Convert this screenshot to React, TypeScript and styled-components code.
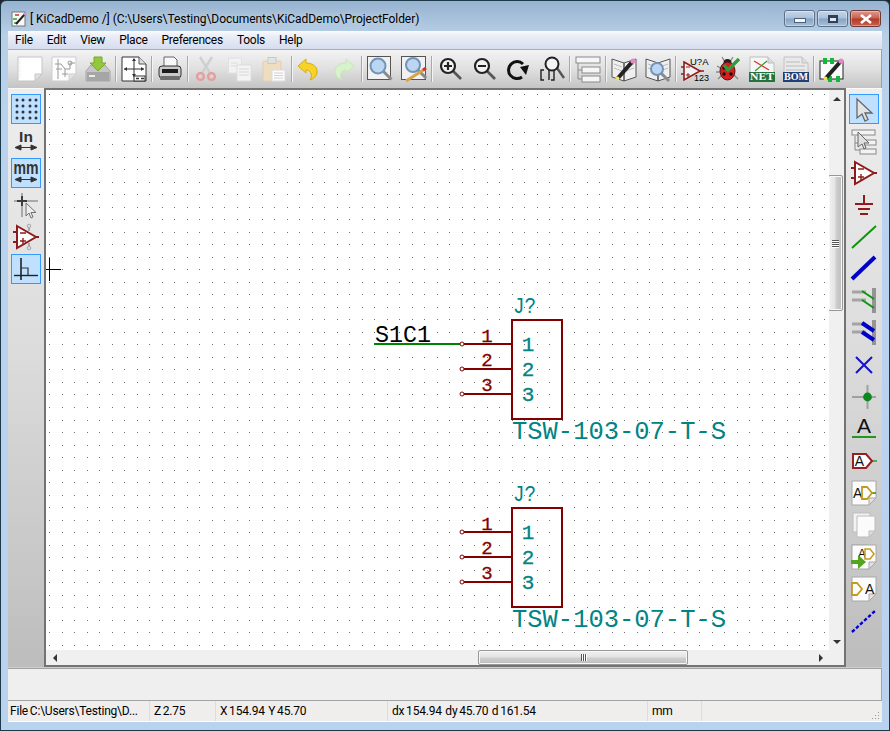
import React, { useMemo } from 'react';
import styled, { createGlobalStyle } from 'styled-components';

const GlobalStyle = createGlobalStyle`
  html, body {
    margin: 0;
    padding: 0;
    background: #20262c;
  }
  #root {
    width: 890px;
    height: 731px;
  }
`;

const Window = styled.div`
  width: 890px;
  height: 731px;
  box-sizing: border-box;
  display: flex;
  flex-direction: column;
  border: 1px solid #1d3a4a;
  border-radius: 6px 6px 0 0;
  overflow: hidden;
  padding: 0 7px 8px;
  background: linear-gradient(180deg, #97b3d0 0, #b8cfe6 34px, #b9d3ee 120px, #b9d3ee 100%);
  font-family: Roboto, sans-serif;
  color: #000;
`;

const TitleBar = styled.div`
  height: 30px;
  box-sizing: border-box;
  flex-shrink: 0;
  display: flex;
  align-items: flex-start;
  gap: 3px;
  padding: 10px 1px 0 3px;
`;

const TitleText = styled.span`
  flex: 1;
  font-size: 12px;
  line-height: 17px;
  letter-spacing: -0.05px;
  white-space: pre;
  text-shadow: 0 0 6px rgba(255, 255, 255, 0.6);
`;

const WinButtons = styled.div`
  display: flex;
  gap: 2px;
  margin-top: -1px;
`;

const WinButton = styled.div<{ $close?: boolean }>`
  width: 31px;
  height: 17px;
  box-sizing: border-box;
  display: flex;
  align-items: center;
  justify-content: center;
  border: 1px solid ${(p) => (p.$close ? '#6e3a38' : '#5c7088')};
  border-radius: 3px;
  box-shadow: inset 0 0 0 1px rgba(255, 255, 255, 0.35);
  background: ${(p) =>
    p.$close
      ? 'linear-gradient(180deg, #dc9a8e 0, #c9604e 48%, #b13a28 52%, #c8604f 100%)'
      : 'linear-gradient(180deg, #c6d6e8 0, #a9c0da 48%, #86a3c4 52%, #a6c0da 100%)'};
`;

const MinGlyph = styled.div`
  width: 10px;
  height: 3px;
  margin-top: 4px;
  background: #f4f7fb;
  border: 1px solid #4e6076;
`;

const MaxGlyph = styled.div`
  width: 10px;
  height: 8px;
  box-sizing: border-box;
  border: 2px solid #2f4156;
  border-top-width: 3px;
  background: #dfe8f2;
`;

const MenuBar = styled.div`
  height: 18px;
  flex-shrink: 0;
  display: flex;
  background: linear-gradient(180deg, #fafbfd 0, #e9edf7 30%, #d6ddee 100%);
`;

const MenuItem = styled.span`
  font-size: 12px;
  line-height: 18px;
  letter-spacing: -0.25px;
  padding: 0 7px;
`;

const TopBar = styled.div`
  height: 39px;
  box-sizing: border-box;
  flex-shrink: 0;
  display: flex;
  align-items: center;
  padding: 0 0 1px 5px;
  border-top: 1px solid #a9adb4;
  border-right: 1px solid #a0a0a0;
  background: linear-gradient(180deg, #f3f3f3 0, #e0e0e0 50%, #c4c4c4 100%);
`;

const TopButton = styled.div`
  width: 34px;
  height: 30px;
  flex-shrink: 0;
  display: flex;
  align-items: center;
  justify-content: center;
`;

const TopSep = styled.div`
  width: 2px;
  height: 26px;
  flex-shrink: 0;
  background: linear-gradient(90deg, #a8a8a8 50%, #f4f4f4 50%);
`;

const Main = styled.div`
  flex: 1;
  min-height: 0;
  display: flex;
`;

const SideBar = styled.div`
  width: 36px;
  flex-shrink: 0;
  box-sizing: border-box;
  display: flex;
  flex-direction: column;
  align-items: center;
  gap: 2px;
  padding-top: 5px;
  border-top: 1px solid #fafafa;
  background: linear-gradient(180deg, #eeeeee 0, #dcdcdc 45%, #bdbdbd 100%);
`;

const SideButton = styled.div<{ $active?: boolean }>`
  width: 30px;
  height: 30px;
  flex-shrink: 0;
  box-sizing: border-box;
  display: flex;
  align-items: center;
  justify-content: center;
  border: 1px solid ${(p) => (p.$active ? '#3399ff' : 'transparent')};
  background: ${(p) => (p.$active ? '#bfe0ff' : 'transparent')};
`;

const CanvasFrame = styled.div`
  flex: 1;
  min-width: 0;
  box-sizing: border-box;
  display: grid;
  grid-template-columns: 1fr 15px;
  grid-template-rows: 1fr 15px;
  border: 2px solid #737373;
  background: #f0f0f0;
`;

const Canvas = styled.div`
  position: relative;
  background: #fff;
  overflow: hidden;
`;

const Sheet = styled.svg`
  display: block;
  width: 100%;
  height: 100%;
  shape-rendering: crispEdges;
`;

const SchText = styled.text`
  font-family: 'Liberation Mono', monospace;
  shape-rendering: auto;
`;

const VScroll = styled.div`
  display: flex;
  flex-direction: column;
  background: #f0f0f0;
`;

const HScroll = styled.div`
  display: flex;
  background: #f0f0f0;
`;

const Corner = styled.div`
  background: #f0f0f0;
`;

const ArrowCell = styled.div<{ $along: 'v' | 'h' }>`
  ${(p) => (p.$along === 'v' ? 'height: 17px;' : 'width: 17px;')}
  flex-shrink: 0;
  display: flex;
  align-items: center;
  justify-content: center;
`;

const Arrow = styled.div<{ $dir: 'up' | 'down' | 'left' | 'right' }>`
  width: 0;
  height: 0;
  border-style: solid;
  border-color: transparent;
  ${(p) => (p.$dir === 'up' ? 'border-width: 0 4px 4px; border-bottom-color: #333;' : '')}
  ${(p) => (p.$dir === 'down' ? 'border-width: 4px 4px 0; border-top-color: #333;' : '')}
  ${(p) => (p.$dir === 'left' ? 'border-width: 4px 4px 4px 0; border-right-color: #333;' : '')}
  ${(p) => (p.$dir === 'right' ? 'border-width: 4px 0 4px 4px; border-left-color: #333;' : '')}
`;

const Track = styled.div<{ $along: 'v' | 'h' }>`
  flex: 1;
  display: flex;
  flex-direction: ${(p) => (p.$along === 'v' ? 'column' : 'row')};
`;

const VThumb = styled.div`
  width: 15px;
  height: 136px;
  margin-top: 68px;
  margin-left: -1px;
  box-sizing: border-box;
  display: flex;
  flex-direction: column;
  align-items: center;
  justify-content: center;
  gap: 1px;
  border: 1px solid #979797;
  border-radius: 2px;
  box-shadow: inset 0 0 0 1px #f8f8f8;
  background: linear-gradient(90deg, #f1f1f1 0, #e4e4e4 45%, #cfcfcf 55%, #bcbcbc 100%);
`;

const HThumb = styled.div`
  width: 210px;
  height: 15px;
  margin-left: 415px;
  box-sizing: border-box;
  display: flex;
  align-items: center;
  justify-content: center;
  gap: 1px;
  border: 1px solid #979797;
  border-radius: 2px;
  box-shadow: inset 0 0 0 1px #f8f8f8;
  background: linear-gradient(180deg, #f1f1f1 0, #e4e4e4 45%, #cfcfcf 55%, #bcbcbc 100%);
`;

const VGrip = styled.div`
  width: 7px;
  height: 1px;
  background: #555;
  box-shadow: 0 1px 0 #fff;
`;

const HGrip = styled.div`
  width: 1px;
  height: 7px;
  background: #555;
  box-shadow: 1px 0 0 #fff;
`;

const MessagePanel = styled.div`
  height: 33px;
  flex-shrink: 0;
  box-sizing: border-box;
  margin-top: 1px;
  border-top: 1px solid #a3a3a3;
  border-right: 1px solid #a3a3a3;
  border-bottom: 1px solid #a3a3a3;
  background: #efefef;
`;

const StatusBar = styled.div`
  height: 21px;
  flex-shrink: 0;
  box-sizing: border-box;
  display: flex;
  position: relative;
  background: #f0eded;
  border-bottom: 1px solid #fff;
  font-size: 12px;
  line-height: 20px;
  letter-spacing: -0.2px;
  word-spacing: -1px;
`;

const StatusCell = styled.div<{ $w: number; $last?: boolean }>`
  width: ${(p) => p.$w}px;
  flex-shrink: 0;
  box-sizing: border-box;
  padding-left: ${(p) => (p.$w === 142 ? 2 : 4)}px;
  white-space: pre;
  overflow: hidden;
  border-right: ${(p) => (p.$last ? 'none' : '1px solid #dcdcdc')};
`;

const Grip = styled.svg`
  position: absolute;
  right: 2px;
  bottom: 1px;
`;

const Icon = styled.svg.attrs({ viewBox: '0 0 26 26' })`
  width: 26px;
  height: 26px;
  display: block;
  flex-shrink: 0;
  overflow: visible;
`;

const IconText = styled.text<{ $serif?: boolean }>`
  font-family: ${(p) => (p.$serif ? "'Liberation Serif', serif" : "'Liberation Sans', sans-serif")};
`;

// shared bits of the toolbar drawings
const Page = ({ stroke = '#b5b5b5', fill = '#fcfcfc' }: { stroke?: string; fill?: string }) => (
  <>
    <path d="M1 1H25V18L18 25H1Z" fill={fill} stroke={stroke} />
    <path d="M25 18H18V25Z" fill="#e2e2e2" stroke={stroke} />
  </>
);

const Pencil = ({ d = 'M22 5L7 22' }: { d?: string }) => (
  <>
    <path d={d} stroke="#222" strokeWidth="4" />
    <circle cx="22" cy="5" r="2.6" fill="#e28bc4" />
    <circle cx="6.5" cy="22.5" r="2" fill="#f4e04d" />
  </>
);

const Lens = ({ cx = 11, cy = 10, r = 7.5 }: { cx?: number; cy?: number; r?: number }) => (
  <>
    <path d={`M${cx + r * 0.7} ${cy + r * 0.7}L${cx + r + 6} ${cy + r + 6}`} stroke="#8b8b8b" strokeWidth="3" />
    <circle cx={cx} cy={cy} r={r} fill="#bcd6f2" stroke="#7094bb" strokeWidth="2" />
  </>
);

const Opamp = () => (
  <>
    <path d="M0 8H5M0 18H5M22 13H26" stroke="#8f1c1c" strokeWidth="2" />
    <path d="M4 2L23 13L4 24Z" fill="#fff" stroke="#8f1c1c" strokeWidth="2" />
    <path d="M7 9H13M7 17H13M10 14V20" stroke="#8f1c1c" strokeWidth="1.4" fill="none" />
  </>
);

const Port = ({ x = 0 }: { x?: number }) => (
  <path d={`M${x} 7H${x + 5}L${x + 10} 13L${x + 5} 19H${x}Z`} fill="#fff" stroke="#c49a1e" strokeWidth="1.8" />
);

const NewIcon = () => (
  <Icon>
    <Page stroke="#c4c4c4" fill="#fff" />
    <path d="M3 3V23" stroke="#e6e6e6" strokeDasharray="1 1" />
  </Icon>
);

const SchematicIcon = () => (
  <Icon>
    <Page stroke="#cdcdcd" />
    <path d="M7 3V23M4 8H10M10 8L14 13M14 13V21M14 13H19V7M19 7H24M5 13H11M11 18H17" stroke="#9a9a9a" fill="none" />
    <circle cx="19" cy="7" r="2" fill="none" stroke="#9a9a9a" />
  </Icon>
);

const SaveIcon = () => (
  <Icon>
    <path d="M1 15L6 9H20L25 15V25H1Z" fill="#c6c6c6" stroke="#a6a6a6" />
    <path d="M2 16H24V25H2Z" fill="#a6a6a6" />
    <path d="M4 19H10V21H4Z" fill="#ececec" />
    <path d="M9 1H17V7H21L13 15L5 7H9Z" fill="#93c83c" stroke="#79a92c" />
  </Icon>
);

const SettingsIcon = () => (
  <Icon>
    <path d="M1 1H18L25 8V25H1Z" fill="#fff" stroke="#333" />
    <path d="M18 1V8H25" fill="#ddd" stroke="#555" />
    <path d="M3 13H23M13 3V21" stroke="#333" />
    <path d="M13 2L11 5H15ZM3 13L6 11V15ZM23 13L20 11V15ZM13 21L11 18H15Z" fill="#333" />
    <rect x="13" y="20" width="11" height="5" fill="#fff" stroke="#333" />
    <path d="M15 22.5H18M20 22.5H23" stroke="#333" strokeWidth="1.6" />
  </Icon>
);

const PrintIcon = () => (
  <Icon>
    <path d="M7 1H17L20 4V12H7Z" fill="#f8f8f8" stroke="#666" />
    <rect x="2" y="10" width="22" height="12" rx="3" fill="#c9c9c9" stroke="#333" />
    <rect x="5" y="13" width="16" height="4" fill="#1c1c1c" />
    <rect x="3" y="20" width="20" height="4" rx="1" fill="#6e6e6e" />
  </Icon>
);

const CutIcon = () => (
  <Icon>
    <path d="M7 1L17 17M19 1L9 17" stroke="#cfcfcf" strokeWidth="2.4" />
    <circle cx="7.5" cy="20.5" r="3.4" fill="none" stroke="#e89d9d" strokeWidth="2.4" />
    <circle cx="18.5" cy="20.5" r="3.4" fill="none" stroke="#e89d9d" strokeWidth="2.4" />
  </Icon>
);

const CopyIcon = () => (
  <Icon>
    <rect x="1.5" y="2" width="13" height="15" fill="#f2f2f2" stroke="#e0e0e0" />
    <path d="M4 7H11M4 10H11" stroke="#dadada" />
    <rect x="10" y="9" width="14" height="16" fill="#f4f4f4" stroke="#dcdcdc" />
    <path d="M12 13H22M12 16H22M12 19H22" stroke="#d6d6d6" />
  </Icon>
);

const PasteIcon = () => (
  <Icon>
    <rect x="2" y="5" width="18" height="20" rx="1" fill="#efddc2" stroke="#e2cfb2" />
    <rect x="7" y="1.5" width="8" height="6" fill="#e2e2e2" stroke="#c9c9c9" />
    <rect x="11" y="14" width="13" height="11" fill="#fbfbfb" stroke="#dcdcdc" />
    <path d="M13 17H22M13 19.5H22M13 22H22" stroke="#d2d2d2" />
  </Icon>
);

const undoPath = 'M1 10L9 3V7C16 7 21 11 20 17C19 21 16 23 13 24C15 21 15 17 12 15C11 14 10 14 9 14V17Z';

const UndoIcon = () => (
  <Icon>
    <path d={undoPath} fill="#f6d326" stroke="#d9ab0c" />
  </Icon>
);

const RedoIcon = () => (
  <Icon>
    <path d={undoPath} transform="translate(24 0) scale(-1 1)" fill="#d8f2cb" stroke="#c6e6b6" />
  </Icon>
);

const ZoomFitIcon = () => (
  <Icon>
    <rect x="0.5" y="0.5" width="23" height="23" fill="#f1f1f1" stroke="#555" />
    <Lens />
  </Icon>
);

const FindEditIcon = () => (
  <Icon>
    <rect x="0.5" y="0.5" width="24" height="23" fill="#f1f1f1" stroke="#555" />
    <Lens cx={12} cy={9} r={7} />
    <path d="M5 25L24 13" stroke="#d8a446" strokeWidth="3" />
    <path d="M22 14L25 12" stroke="#d2332b" strokeWidth="3" />
  </Icon>
);

const Magnifier = ({ children }: { children?: React.ReactNode }) => (
  <Icon>
    <path d="M16 15L24 23" stroke="#555" strokeWidth="2.6" />
    <circle cx="11" cy="10" r="7" fill="#f2f2f2" stroke="#222" strokeWidth="2.2" />
    {children}
  </Icon>
);

const ZoomInIcon = () => (
  <Magnifier>
    <path d="M7 10H15M11 6V14" stroke="#222" strokeWidth="2.2" />
  </Magnifier>
);

const ZoomOutIcon = () => (
  <Magnifier>
    <path d="M7 10H15" stroke="#222" strokeWidth="2.2" />
  </Magnifier>
);

const RedrawIcon = () => (
  <Icon>
    <path d="M17 21A8.5 8.5 0 1 1 18 8" fill="none" stroke="#111" strokeWidth="3" />
    <path d="M15 11L24 9L21 19Z" fill="#111" />
  </Icon>
);

const ZoomAreaIcon = () => (
  <Icon>
    <path d="M18 12L25 22" stroke="#555" strokeWidth="2.4" />
    <circle cx="13" cy="8" r="6.5" fill="#f4f4f4" stroke="#222" strokeWidth="2" />
    <path d="M5 14H2V24H5M10 14V24M12 24H15V14" fill="none" stroke="#222" strokeWidth="1.4" />
  </Icon>
);

const HierarchyIcon = () => (
  <Icon>
    <path d="M3 7V23H7M3 14H7" fill="none" stroke="#8a8a8a" />
    <rect x="1" y="1" width="24" height="6" fill="#f6f6f6" stroke="#8a8a8a" />
    <rect x="7" y="11" width="18" height="6" fill="#f6f6f6" stroke="#8a8a8a" />
    <rect x="7" y="20" width="18" height="6" fill="#f6f6f6" stroke="#8a8a8a" />
  </Icon>
);

const Book = () => (
  <>
    <path d="M1 3L13 7V25L1 21ZM25 3L13 7V25L25 21Z" fill="#efefef" stroke="#555" />
    <path d="M3 8L11 11M3 12L11 15M15 11L23 8M15 15L23 12" stroke="#bbb" />
  </>
);

const LibEditIcon = () => (
  <Icon>
    <Book />
    <Pencil d="M21 6L7 22" />
  </Icon>
);

const LibBrowseIcon = () => (
  <Icon>
    <Book />
    <Lens cx={12} cy={13} r={6} />
  </Icon>
);

const AnnotateIcon = () => (
  <Icon>
    <path d="M0 11H3M0 18H3M19 15H23" stroke="#8f1c1c" strokeWidth="1.4" />
    <path d="M3 6L19 15L3 24Z" fill="#f2f2f2" stroke="#8f1c1c" strokeWidth="1.6" />
    <path d="M5 11H9M5 19H9M7 17V21" stroke="#8f1c1c" />
    <IconText x="9" y="9" fontSize="9.5" fill="#000">U?A</IconText>
    <IconText x="13" y="25" fontSize="9" fill="#000">123</IconText>
  </Icon>
);

const BugIcon = () => (
  <Icon>
    <path d="M7 1L10 6M18 1L15 6M2 10L7 13M1 16H6M3 23L7 19M23 23L19 19" stroke="#8a8a8a" strokeWidth="1.4" />
    <circle cx="12.5" cy="7" r="4" fill="#222" />
    <ellipse cx="12.5" cy="15" rx="7.5" ry="9" fill="#d81f1f" stroke="#5a0f0f" />
    <circle cx="9" cy="12" r="1.7" fill="#111" />
    <circle cx="9" cy="18" r="1.7" fill="#111" />
    <circle cx="16" cy="18" r="1.7" fill="#111" />
    <path d="M9 9L13 14L24 3" fill="none" stroke="#2b9e3a" strokeWidth="3.4" />
  </Icon>
);

const NetIcon = () => (
  <Icon>
    <path d="M1 1H19L25 7V25H1Z" fill="#f6f6f6" stroke="#bdbdbd" />
    <path d="M19 1V7H25" fill="#ddd" stroke="#bdbdbd" />
    <path d="M5 5L20 14" stroke="#d83a2a" strokeWidth="1.3" />
    <path d="M6 15L18 5" stroke="#3a9a3a" strokeWidth="1.3" />
    <rect x="0" y="16" width="26" height="10" fill="#24733a" />
    <IconText $serif x="13" y="24.4" textAnchor="middle" fontSize="10" fontWeight="700" fill="#fff" textLength="24" lengthAdjust="spacingAndGlyphs">
      NET
    </IconText>
  </Icon>
);

const BomIcon = () => (
  <Icon>
    <path d="M1 1H19L25 7V25H1Z" fill="#e9e9e9" stroke="#c2c2c2" />
    <path d="M19 1V7H25" fill="#ddd" stroke="#c2c2c2" />
    <path d="M3 6H17M3 10H22M3 14H22" stroke="#d2d2d2" strokeWidth="2" />
    <rect x="0" y="16" width="26" height="10" fill="#1f3f78" />
    <IconText $serif x="13" y="24.4" textAnchor="middle" fontSize="10" fontWeight="700" fill="#fff" textLength="24" lengthAdjust="spacingAndGlyphs">
      BOM
    </IconText>
  </Icon>
);

const PcbIcon = () => (
  <Icon>
    <rect x="1" y="5" width="23" height="18" fill="#fbfbfb" stroke="#222" />
    <rect x="4" y="2" width="4" height="6" fill="#12b83a" />
    <rect x="11" y="2" width="4" height="6" fill="#12b83a" />
    <rect x="9" y="20" width="4" height="6" fill="#12b83a" />
    <rect x="17" y="20" width="4" height="6" fill="#12b83a" />
    <Pencil d="M22 5L7 22" />
  </Icon>
);

const GridIcon = () => (
  <Icon>
    {[4, 10, 16, 22].map((y) =>
      [4, 10, 17, 23].map((x) => <circle key={`${x}-${y}`} cx={x} cy={y} r="1.5" fill="#2e3640" />)
    )}
  </Icon>
);

const UnitArrow = () => (
  <path d="M3 19.5H23M2 19.5L8 17V22ZM24 19.5L18 17V22Z" stroke="#333" strokeWidth="1" fill="#333" />
);

const InchIcon = () => (
  <Icon>
    <IconText x="13" y="14" textAnchor="middle" fontSize="15.5" fontWeight="700" fill="#333">In</IconText>
    <UnitArrow />
  </Icon>
);

const MmIcon = () => (
  <Icon>
    <IconText x="13" y="13.5" textAnchor="middle" fontSize="18" fontWeight="700" fill="#333" textLength="25" lengthAdjust="spacingAndGlyphs">
      mm
    </IconText>
    <UnitArrow />
  </Icon>
);

const CursorCrossIcon = () => (
  <Icon>
    <path d="M1 9H25M9 1V25" stroke="#a9a9a9" strokeWidth="2" />
    <path d="M4 9H14M9 4V14" stroke="#3c3c3c" strokeWidth="2" />
    <path d="M13 11V24L16 21L18 26L20 25L18 20.5H23Z" fill="#eee" stroke="#707070" />
  </Icon>
);

const AngleIcon = () => (
  <Icon>
    <path d="M1 19.5H25" stroke="#222" strokeWidth="1.4" />
    <path d="M8 2V24" stroke="#222" strokeWidth="1.6" />
    <path d="M8 12H15V19" fill="none" stroke="#333" strokeWidth="1.2" />
  </Icon>
);

const OpampPinsIcon = () => (
  <Icon>
    <path d="M16 2V7M16 19V24" stroke="#aaa" strokeWidth="2" />
    <Opamp />
    <circle cx="16" cy="2" r="1.8" fill="#ddd" stroke="#aaa" />
    <circle cx="16" cy="24" r="1.8" fill="#ddd" stroke="#aaa" />
  </Icon>
);

const SelectIcon = () => (
  <Icon>
    <path d="M6 3V22L11 18L14 25L17 23.5L14 17H21Z" fill="#e4e4e4" stroke="#666" strokeWidth="1.3" />
  </Icon>
);

const NavigatorIcon = () => (
  <Icon>
    <path d="M4 8V22H10M4 15H12" fill="none" stroke="#888" />
    <rect x="1" y="2" width="23" height="5" fill="#f3f3f3" stroke="#888" />
    <rect x="13" y="12" width="12" height="5" fill="#f3f3f3" stroke="#888" />
    <rect x="9" y="21" width="16" height="5" fill="#f3f3f3" stroke="#888" />
    <path d="M7 4V19L11 16L13 21L15 20L13 15H18Z" fill="#e0e0e0" stroke="#666" />
  </Icon>
);

const OpampIcon = () => (
  <Icon>
    <Opamp />
  </Icon>
);

const PowerIcon = () => (
  <Icon>
    <path d="M13 3V12M4 12H22M7 17H19M9 22H17" stroke="#8f1c1c" strokeWidth="2" />
  </Icon>
);

const WireIcon = () => (
  <Icon>
    <path d="M1 24L25 2" stroke="#0d960d" strokeWidth="2" />
  </Icon>
);

const BusIcon = () => (
  <Icon>
    <path d="M1 23L24 1" stroke="#0000c8" strokeWidth="4" />
  </Icon>
);

const EntryIcon = ({ color, w }: { color: string; w: number }) => (
  <Icon>
    <path d="M23 0V25" stroke="#949494" strokeWidth="4" />
    <path d="M1 4H15M1 12H15" stroke="#a4a4a4" strokeWidth="3" />
    <path d="M11 3L23 11M11 12L23 20" stroke={color} strokeWidth={w} />
  </Icon>
);

const WireEntryIcon = () => <EntryIcon color="#0d960d" w={2} />;
const BusEntryIcon = () => <EntryIcon color="#0000c8" w={4} />;

const NoConnectIcon = () => (
  <Icon>
    <path d="M5 5L21 21M21 5L5 21" stroke="#1212cc" strokeWidth="2" />
  </Icon>
);

const JunctionIcon = () => (
  <Icon>
    <path d="M1 13H25M16.5 1V25" stroke="#a0a0a0" strokeWidth="2" />
    <circle cx="16.5" cy="13" r="4.4" fill="#0a8a1e" />
  </Icon>
);

const LabelIcon = () => (
  <Icon>
    <IconText x="13" y="17" textAnchor="middle" fontSize="21" fill="#111">A</IconText>
    <path d="M1 21H25" stroke="#1f9a1f" strokeWidth="2" />
  </Icon>
);

const GlobalLabelIcon = () => (
  <Icon>
    <path d="M21 13H26" stroke="#1f9a1f" strokeWidth="1.4" />
    <path d="M2 6H15L21 13L15 20H2Z" fill="#fff" stroke="#962020" strokeWidth="2" />
    <IconText x="8.5" y="18" textAnchor="middle" fontSize="14" fill="#111">A</IconText>
  </Icon>
);

const HierLabelIcon = () => (
  <Icon>
    <Page stroke="#a8a8a8" />
    <IconText x="2" y="18" fontSize="14" fill="#111">A</IconText>
    <path d="M21 13H25" stroke="#1f9a1f" strokeWidth="1.6" />
    <Port x={11} />
  </Icon>
);

const SheetsIcon = () => (
  <Icon>
    <rect x="2" y="1" width="17" height="19" fill="#f2f2f2" stroke="#bcbcbc" />
    <path d="M6 4H24V19L18 25H6Z" fill="#fbfbfb" stroke="#bcbcbc" />
    <path d="M24 19H18V25Z" fill="#dedede" stroke="#bcbcbc" />
  </Icon>
);

const ImportIcon = () => (
  <Icon>
    <rect x="1" y="1" width="15" height="19" fill="#f2f2f2" stroke="#a8a8a8" />
    <Page stroke="#a8a8a8" />
    <IconText x="7" y="14" fontSize="12" fill="#111">A</IconText>
    <path d="M14 5H19L23 10L19 15H14Z" fill="#fff" stroke="#c49a1e" strokeWidth="1.5" />
    <path d="M0 16H7V11L15 18L7 25V20H0Z" fill="#53a51e" />
  </Icon>
);

const HierPinIcon = () => (
  <Icon>
    <Page stroke="#a8a8a8" />
    <Port x={1} />
    <IconText x="14" y="18" fontSize="14" fill="#111">A</IconText>
  </Icon>
);

const DashedIcon = () => (
  <Icon>
    <path d="M1 24L25 2" stroke="#0000dc" strokeWidth="2.4" strokeDasharray="3.5 2" />
  </Icon>
);

const topTools: (React.FC | null)[] = [
  NewIcon, SchematicIcon, SaveIcon, null,
  SettingsIcon, null,
  PrintIcon, null,
  CutIcon, CopyIcon, PasteIcon, null,
  UndoIcon, RedoIcon, null,
  ZoomFitIcon, FindEditIcon, null,
  ZoomInIcon, ZoomOutIcon, RedrawIcon, ZoomAreaIcon, null,
  HierarchyIcon, null,
  LibEditIcon, LibBrowseIcon, null,
  AnnotateIcon, BugIcon, NetIcon, BomIcon, null,
  PcbIcon,
];

const leftTools: { Glyph: React.FC; active?: boolean }[] = [
  { Glyph: GridIcon, active: true },
  { Glyph: InchIcon },
  { Glyph: MmIcon, active: true },
  { Glyph: CursorCrossIcon },
  { Glyph: OpampPinsIcon },
  { Glyph: AngleIcon, active: true },
];

const rightTools: { Glyph: React.FC; active?: boolean }[] = [
  { Glyph: SelectIcon, active: true },
  { Glyph: NavigatorIcon },
  { Glyph: OpampIcon },
  { Glyph: PowerIcon },
  { Glyph: WireIcon },
  { Glyph: BusIcon },
  { Glyph: WireEntryIcon },
  { Glyph: BusEntryIcon },
  { Glyph: NoConnectIcon },
  { Glyph: JunctionIcon },
  { Glyph: LabelIcon },
  { Glyph: GlobalLabelIcon },
  { Glyph: HierLabelIcon },
  { Glyph: SheetsIcon },
  { Glyph: ImportIcon },
  { Glyph: HierPinIcon },
  { Glyph: DashedIcon },
];

const menus = ['File', 'Edit', 'View', 'Place', 'Preferences', 'Tools', 'Help'];

const RED = '#840000';
const TEAL = '#008484';

const GridDots = () => {
  const d = useMemo(() => {
    let out = '';
    for (let i = 0; i < 64; i++) {
      for (let j = 0; j < 46; j++) {
        const x = Math.round(49 + i * 12.5);
        const y = Math.round(94 + j * 12.52);
        out += `M${x} ${y}h1v1h-1z`;
      }
    }
    return out;
  }, []);
  return <path d={d} fill="#707070" />;
};

const Connector = ({ dy }: { dy: number }) => (
  <g transform={`translate(0 ${dy})`}>
    {[0, 25, 50].map((off, i) => (
      <g key={off}>
        <path d={`M464 ${344 + off}H512`} stroke={RED} strokeWidth="2" />
        <circle cx="462" cy={344 + off} r="2" fill="#fff" stroke={RED} shapeRendering="auto" />
        <SchText x="487" y={342 + off - (i === 0 ? 0 : 1)} textAnchor="middle" fontSize="19" fill={RED} stroke={RED} strokeWidth="0.3">
          {i + 1}
        </SchText>
        <SchText x="528" y={351 + off} textAnchor="middle" fontSize="21" fill={TEAL} stroke={TEAL} strokeWidth="0.3">
          {i + 1}
        </SchText>
      </g>
    ))}
    <rect x="512" y="320" width="50" height="99" fill="none" stroke={RED} strokeWidth="2" />
    <SchText x="513" y="313" fontSize="22" fill={TEAL} textLength="23" lengthAdjust="spacingAndGlyphs">
      J?
    </SchText>
    <SchText x="512" y="439" fontSize="25" fill={TEAL} textLength="214" lengthAdjust="spacingAndGlyphs">
      TSW-103-07-T-S
    </SchText>
  </g>
);

const App: React.FC = () => (
  <>
    <GlobalStyle />
    <Window>
      <TitleBar>
        <svg width="16" height="16" viewBox="0 0 16 16">
          <rect x="1" y="1" width="13" height="14" fill="#f8f8f8" stroke="#777" />
          <path d="M2 8H6M3 12H7" stroke="#2aa52a" strokeWidth="1.6" />
          <path d="M4 4H8" stroke="#c83030" strokeWidth="1.4" />
          <path d="M5 13L14 3" stroke="#222" strokeWidth="2" />
          <circle cx="14" cy="3" r="1.5" fill="#d98ac2" />
        </svg>
        <TitleText>{'[ KiCadDemo /] (C:\\Users\\Testing\\Documents\\KiCadDemo\\ProjectFolder)'}</TitleText>
        <WinButtons>
          <WinButton>
            <MinGlyph />
          </WinButton>
          <WinButton>
            <MaxGlyph />
          </WinButton>
          <WinButton $close>
            <svg width="14" height="10" viewBox="0 0 14 10">
              <path d="M2 1L12 9M12 1L2 9" stroke="#fff" strokeWidth="2.6" />
            </svg>
          </WinButton>
        </WinButtons>
      </TitleBar>
      <MenuBar>
        {menus.map((m) => (
          <MenuItem key={m}>{m}</MenuItem>
        ))}
      </MenuBar>
      <TopBar>
        {topTools.map((Glyph, i) =>
          Glyph ? (
            <TopButton key={i}>
              <Glyph />
            </TopButton>
          ) : (
            <TopSep key={i} />
          )
        )}
      </TopBar>
      <Main>
        <SideBar>
          {leftTools.map(({ Glyph, active }, i) => (
            <SideButton key={i} $active={active}>
              <Glyph />
            </SideButton>
          ))}
        </SideBar>
        <CanvasFrame>
          <Canvas>
            <Sheet viewBox="46 90 783 561" preserveAspectRatio="xMinYMin slice">
              <GridDots />
              <path d="M374 344H462" stroke="#008400" strokeWidth="2" />
              <SchText x="375" y="342" fontSize="24" fill="#000" textLength="56" lengthAdjust="spacingAndGlyphs">
                S1C1
              </SchText>
              <Connector dy={0} />
              <Connector dy={188} />
              <path d="M49.5 258V281M46 269.5H61" stroke="#000" strokeWidth="1" />
            </Sheet>
          </Canvas>
          <VScroll>
            <ArrowCell $along="v">
              <Arrow $dir="up" />
            </ArrowCell>
            <Track $along="v">
              <VThumb>
                <VGrip />
                <VGrip />
                <VGrip />
                <VGrip />
              </VThumb>
            </Track>
            <ArrowCell $along="v">
              <Arrow $dir="down" />
            </ArrowCell>
          </VScroll>
          <HScroll>
            <ArrowCell $along="h">
              <Arrow $dir="left" />
            </ArrowCell>
            <Track $along="h">
              <HThumb>
                <HGrip />
                <HGrip />
                <HGrip />
              </HThumb>
            </Track>
            <ArrowCell $along="h">
              <Arrow $dir="right" />
            </ArrowCell>
          </HScroll>
          <Corner />
        </CanvasFrame>
        <SideBar>
          {rightTools.map(({ Glyph, active }, i) => (
            <SideButton key={i} $active={active}>
              <Glyph />
            </SideButton>
          ))}
        </SideBar>
      </Main>
      <MessagePanel />
      <StatusBar>
        <StatusCell $w={142}>{'File C:\\Users\\Testing\\D...'}</StatusCell>
        <StatusCell $w={66}>Z 2.75</StatusCell>
        <StatusCell $w={172}>{'X 154.94  Y 45.70'}</StatusCell>
        <StatusCell $w={260}>{'dx 154.94  dy 45.70  d 161.54'}</StatusCell>
        <StatusCell $w={54}>mm</StatusCell>
        <StatusCell $w={180} $last />
        <Grip width="10" height="10" viewBox="0 0 10 10">
          <path d="M8 2h1v1h-1zM5 5h1v1h-1zM8 5h1v1h-1zM2 8h1v1h-1zM5 8h1v1h-1zM8 8h1v1h-1z" fill="#9a9a9a" />
        </Grip>
      </StatusBar>
    </Window>
  </>
);

export default App;
